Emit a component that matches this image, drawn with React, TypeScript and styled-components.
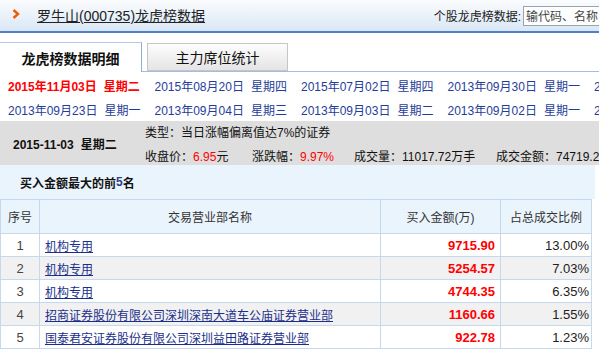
import { createGlobalStyle, styled } from "styled-components";

const GlobalStyle = createGlobalStyle`
  body {
    margin: 0;
    background: #fff;
    font-family: "Liberation Sans", "Noto Sans CJK SC", sans-serif;
    font-size: 12px;
    color: #222;
  }
`;

interface Day {
  date: string;
  week: string;
  current?: boolean;
}

interface Seat {
  name: string;
  amount: string;
  ratio: string;
}

const days: Day[] = [
  { date: "2015年11月03日", week: "星期二", current: true },
  { date: "2015年08月20日", week: "星期四" },
  { date: "2015年07月02日", week: "星期四" },
  { date: "2013年09月30日", week: "星期一" },
  { date: "2013年09月27日", week: "星期五" },
  { date: "2013年09月23日", week: "星期一" },
  { date: "2013年09月04日", week: "星期三" },
  { date: "2013年09月03日", week: "星期二" },
  { date: "2013年09月02日", week: "星期一" },
  { date: "2013年08月30日", week: "星期五" },
];

const seats: Seat[] = [
  { name: "机构专用", amount: "9715.90", ratio: "13.00%" },
  { name: "机构专用", amount: "5254.57", ratio: "7.03%" },
  { name: "机构专用", amount: "4744.35", ratio: "6.35%" },
  { name: "招商证券股份有限公司深圳深南大道车公庙证券营业部", amount: "1160.66", ratio: "1.55%" },
  { name: "国泰君安证券股份有限公司深圳益田路证券营业部", amount: "922.78", ratio: "1.23%" },
];

const App = () => {
  return (
    <Page>
      <GlobalStyle />
      <Header>
        <Chevron width="8" height="10" viewBox="0 0 8 10">
          <polyline points="1.5,1 6,5 1.5,9" fill="none" stroke="#f05a00" strokeWidth="2.4" />
        </Chevron>
        <Title href="#">罗牛山(000735)龙虎榜数据</Title>
        <Search>
          <span>个股龙虎榜数据:</span>
          <SearchInput defaultValue="输代码、名称" />
        </Search>
      </Header>

      <Tabs>
        <Tab active>龙虎榜数据明细</Tab>
        <Tab>主力席位统计</Tab>
      </Tabs>

      <DateGrid>
        {days.map((d, i) => (
          <DateLink key={i} current={d.current}>
            {d.date}
            <Week>{d.week}</Week>
          </DateLink>
        ))}
      </DateGrid>

      <InfoBar>
        <InfoDate>
          2015-11-03<Week>星期二</Week>
        </InfoDate>
        <InfoLines>
          <div>类型：当日涨幅偏离值达7%的证券</div>
          <StatRow>
            <Stat width={107}>
              收盘价：<Red>6.95</Red>元
            </Stat>
            <Stat width={102}>
              涨跌幅：<Red>9.97%</Red>
            </Stat>
            <Stat width={142}>成交量：11017.72万手</Stat>
            <Stat>成交金额：74719.24万元</Stat>
          </StatRow>
        </InfoLines>
      </InfoBar>

      <Band>
        买入金额最大的前<Num>5</Num>名
      </Band>

      <Table>
        <thead>
          <tr>
            <Th width={38}>序号</Th>
            <Th>交易营业部名称</Th>
            <Th width={119}>买入金额(万)</Th>
            <Th width={90}>占总成交比例</Th>
          </tr>
        </thead>
        <tbody>
          {seats.map((s, i) => (
            <Row key={i} striped={i % 2 === 1}>
              <IndexCell>{i + 1}</IndexCell>
              <NameCell>
                <a href="#">{s.name}</a>
              </NameCell>
              <AmountCell>{s.amount}</AmountCell>
              <RatioCell>{s.ratio}</RatioCell>
            </Row>
          ))}
        </tbody>
      </Table>
    </Page>
  );
};

export default App;

const Page = styled.div`
  width: 599px;
  height: 353px;
  overflow: hidden;
`;

const Header = styled.div`
  display: flex;
  align-items: center;
  height: 31px;
  padding-left: 12px;
  background: linear-gradient(#fbfcfe, #d9e7f5);
  border-bottom: 2px solid #4f80c4;
`;

const Chevron = styled.svg`
  margin-right: 17px;
  margin-bottom: 3px;
`;

const Title = styled.a`
  font-size: 14px;
  color: #222;
  text-decoration: underline;
  margin-bottom: 2px;
`;

const Search = styled.div`
  display: flex;
  align-items: center;
  margin-left: auto;
  gap: 2px;
  font-size: 12px;
  color: #222;
  margin-right: -40px;
`;

const SearchInput = styled.input`
  width: 110px;
  height: 18px;
  padding: 0 2px;
  border: 1px solid #9aa4b0;
  font: 12px "Liberation Sans", "Noto Sans CJK SC", sans-serif;
  color: #444;
  background: #fff;
`;

const Tabs = styled.div`
  display: flex;
  align-items: flex-end;
  gap: 5px;
  height: 38px;
  border-bottom: 1px solid #a3bde0;
`;

const Tab = styled.div<{ active?: boolean }>`
  display: flex;
  align-items: center;
  justify-content: center;
  width: ${(p) => (p.active ? "142px" : "141px")};
  height: ${(p) => (p.active ? "30px" : "28px")};
  margin-bottom: ${(p) => (p.active ? "-1px" : "0")};
  font-size: 14px;
  font-weight: ${(p) => (p.active ? 700 : 400)};
  color: #111;
  background: ${(p) => (p.active ? "#fff" : "linear-gradient(#fdfdfd, #e4e4e4)")};
  border: 1px solid ${(p) => (p.active ? "#b7c9e2" : "#c6c6c6")};
  border-left: ${(p) => (p.active ? "none" : "1px solid #c6c6c6")};
  border-right-color: ${(p) => (p.active ? "#8eaed9" : "#c6c6c6")};
  border-bottom: ${(p) => (p.active ? "none" : "1px solid #c6c6c6")};
  box-sizing: border-box;
`;

const DateGrid = styled.div`
  display: grid;
  grid-template-columns: repeat(5, 146.5px);
  grid-auto-rows: 24px;
  padding: 0 0 0 8px;
  margin-top: 1px;
`;

const DateLink = styled.a<{ current?: boolean }>`
  display: flex;
  align-items: center;
  white-space: nowrap;
  font-size: 12px;
  font-weight: ${(p) => (p.current ? 700 : 400)};
  color: ${(p) => (p.current ? "#f00" : "#1f3d99")};
  text-decoration: none;
`;

const Week = styled.span`
  margin-left: 7px;
`;

const InfoBar = styled.div`
  display: flex;
  align-items: center;
  height: 44px;
  background: #dedede;
`;

const InfoDate = styled.div`
  flex: 0 0 145px;
  box-sizing: border-box;
  padding-left: 13px;
  font-weight: 700;
  color: #111;
  white-space: nowrap;
`;

const InfoLines = styled.div`
  display: flex;
  flex-direction: column;
  gap: 7px;
  white-space: nowrap;
  color: #111;
`;

const StatRow = styled.div`
  display: flex;
`;

const Stat = styled.span<{ width?: number }>`
  flex: 0 0 ${(p) => (p.width ? `${p.width}px` : "auto")};
`;

const Red = styled.span`
  color: #f00;
`;

const Band = styled.div`
  display: flex;
  align-items: center;
  width: 595px;
  height: 34px;
  padding-left: 20px;
  box-sizing: border-box;
  background: #eaf4fd;
  font-weight: 700;
  color: #111;
`;

const Num = styled.span`
  color: #2a3f8a;
`;

const Table = styled.table`
  width: 592px;
  border-collapse: collapse;
  table-layout: fixed;
  font-size: 12px;
`;

const Th = styled.th<{ width?: number }>`
  width: ${(p) => (p.width ? `${p.width}px` : "auto")};
  height: 33px;
  padding: 0;
  font-weight: 400;
  color: #333;
  background: #eaf4fd;
  border: 1px solid #c5d8ee;
  text-align: center;
`;

const Row = styled.tr<{ striped?: boolean }>`
  height: 23px;
  background: ${(p) => (p.striped ? "#f1f1f1" : "#fff")};

  td {
    padding: 0;
    border: 1px solid #c5d8ee;
    white-space: nowrap;
    overflow: hidden;
  }
`;

const IndexCell = styled.td`
  text-align: center;
  color: #444;
  font-size: 13px;
`;

const NameCell = styled.td`
  && {
    padding-left: 5px;
  }

  a {
    color: #1b2f8a;
    text-decoration: underline;
  }
`;

const AmountCell = styled.td`
  text-align: right;
  && {
    padding-right: 5px;
  }
  color: #f00;
  font-size: 13px;
  font-weight: 700;
`;

const RatioCell = styled.td`
  text-align: right;
  && {
    padding-right: 2px;
  }
  color: #222;
  font-size: 13px;
`;
